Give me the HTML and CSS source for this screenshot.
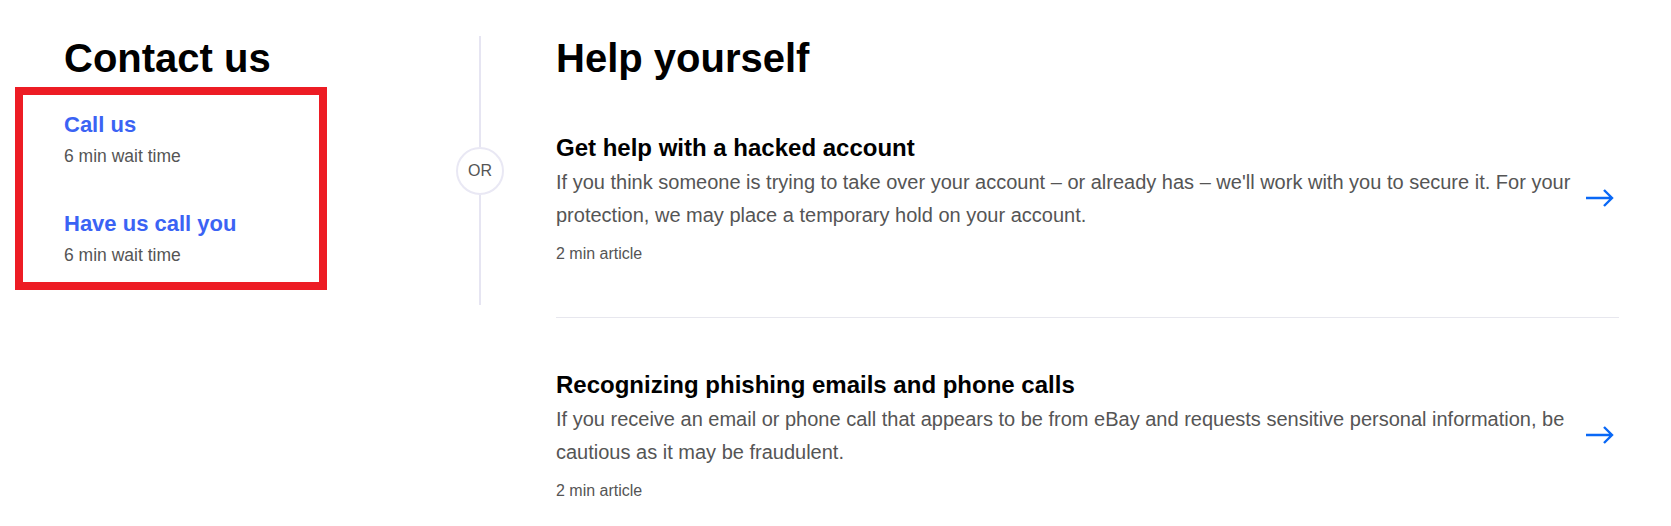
FILE: index.html
```html
<!DOCTYPE html>
<html lang="en">
<head>
<meta charset="utf-8">
<title>Contact us</title>
<link rel="stylesheet" href="styles.css">
</head>
<body>
<main class="page">
  <section class="contact">
    <h2 class="section-title contact-title">Contact us</h2>
    <div class="contact-box">
      <div class="option">
        <a class="option-link" href="#">Call us</a>
        <div class="option-meta">6 min wait time</div>
      </div>
      <div class="option">
        <a class="option-link" href="#">Have us call you</a>
        <div class="option-meta">6 min wait time</div>
      </div>
    </div>
  </section>

  <div class="divider">
    <div class="divider-line"></div>
    <div class="divider-or">OR</div>
    <div class="divider-line"></div>
  </div>

  <section class="help">
    <h2 class="section-title">Help yourself</h2>
    <a class="article" href="#">
      <div class="article-text">
        <h3 class="article-title">Get help with a hacked account</h3>
        <p class="article-desc">If you think someone is trying to take over your account – or already has – we'll work with you to secure it. For your protection, we may place a temporary hold on your account.</p>
        <div class="article-meta">2 min article</div>
      </div>
      <svg class="article-arrow" viewBox="0 0 28 18" width="28" height="18" aria-hidden="true"><path d="M0 9H26M18 1L26 9L18 17" fill="none" stroke="currentColor" stroke-width="2.4"/></svg>
    </a>
    <a class="article" href="#">
      <div class="article-text">
        <h3 class="article-title">Recognizing phishing emails and phone calls</h3>
        <p class="article-desc">If you receive an email or phone call that appears to be from eBay and requests sensitive personal information, be cautious as it may be fraudulent.</p>
        <div class="article-meta">2 min article</div>
      </div>
      <svg class="article-arrow" viewBox="0 0 28 18" width="28" height="18" aria-hidden="true"><path d="M0 9H26M18 1L26 9L18 17" fill="none" stroke="currentColor" stroke-width="2.4"/></svg>
    </a>
  </section>
</main>
</body>
</html>
```

FILE: styles.css
```css
* { box-sizing: border-box; }

html, body {
  margin: 0;
  background: #ffffff;
  font-family: "Liberation Sans", Arial, sans-serif;
  color: #111111;
}

.page {
  display: flex;
  align-items: flex-start;
  padding: 35px 0 0 15px;
}

.contact {
  width: 441px;
  flex: none;
}

.section-title {
  margin: 0;
  font-size: 40px;
  line-height: 46px;
  font-weight: 700;
  color: #000000;
}

.contact-title {
  padding-left: 49px;
}

.contact-box {
  width: 312px;
  margin-top: 6px;
  border: 8px solid #ed1c24;
  padding: 16px 0 15px 41px;
  display: flex;
  flex-direction: column;
  gap: 42px;
}

.option {
  display: flex;
  flex-direction: column;
  gap: 5px;
}

.option-link {
  font-size: 22px;
  line-height: 28px;
  font-weight: 700;
  color: #3b63f4;
  text-decoration: none;
}

.option-meta {
  font-size: 17.5px;
  line-height: 24px;
  color: #555555;
}

.divider {
  width: 48px;
  height: 269px;
  margin-top: 1px;
  flex: none;
  display: flex;
  flex-direction: column;
  align-items: center;
}

.divider-line {
  flex: 1;
  width: 2px;
  background: #e6e5f2;
}

.divider-or {
  width: 48px;
  height: 48px;
  border: 2px solid #e9e8f4;
  border-radius: 50%;
  display: flex;
  align-items: center;
  justify-content: center;
  font-size: 16px;
  color: #555555;
}

.help {
  margin-left: 52px;
  width: 1063px;
  flex: none;
}

.article {
  display: flex;
  align-items: center;
  padding: 51px 0 53px;
  border-bottom: 1px solid #e7e7ee;
  text-decoration: none;
}

.article:last-child {
  border-bottom: none;
}

.article-text {
  flex: 1;
  margin-right: 12px;
}

.article-title {
  margin: 0 0 2px;
  font-size: 24px;
  line-height: 32px;
  font-weight: 700;
  color: #000000;
}

.article-desc {
  margin: 0;
  font-size: 20px;
  line-height: 33px;
  color: #555555;
}

.article-meta {
  margin-top: 12px;
  font-size: 16px;
  line-height: 20px;
  color: #555555;
}

.article-arrow {
  flex: none;
  margin-right: 5px;
  color: #0968f6;
}
```
